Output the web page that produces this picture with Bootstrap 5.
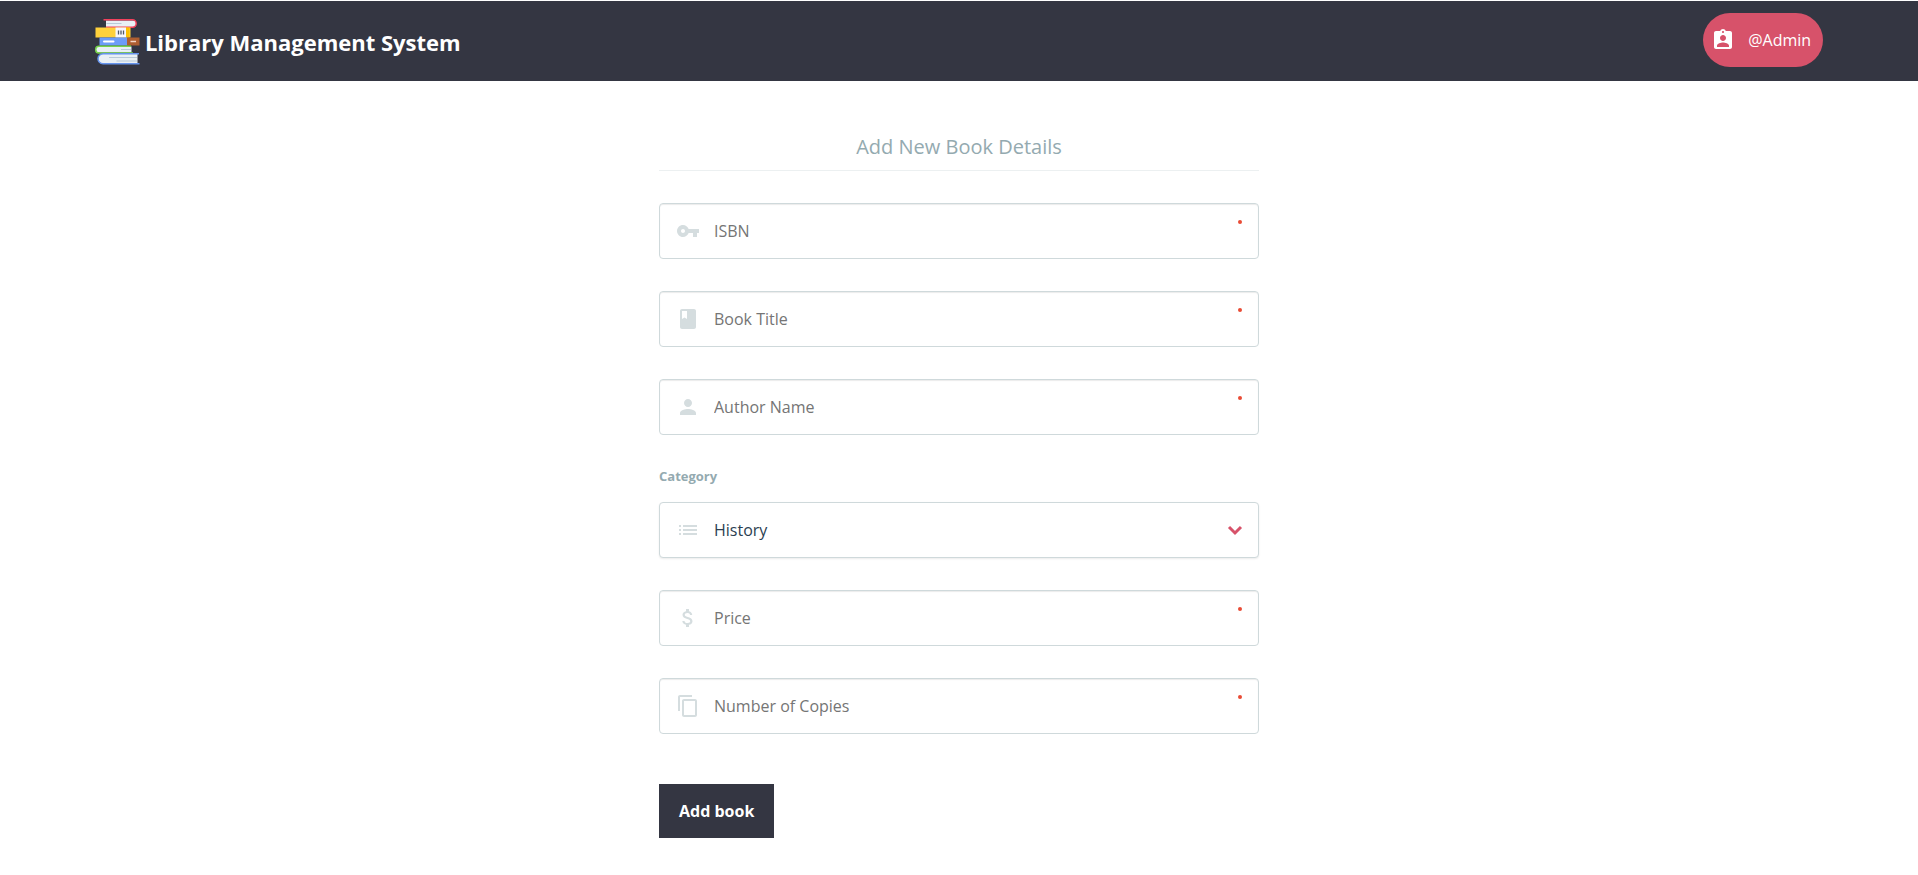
<!DOCTYPE html>
<html lang="en">
<head>
<meta charset="utf-8">
<meta name="viewport" content="width=device-width, initial-scale=1">
<title>Library Management System</title>
<link rel="stylesheet" href="https://cdn.jsdelivr.net/npm/bootstrap@5.3.0/dist/css/bootstrap.min.css">
<style>
  body { font-family: "Open Sans", sans-serif; font-size: 16px; color: #2b3e51; background: #fff; }
  .site-header { background: #343642; padding: 12px calc(5% - 1px) 14px; margin-top: 1px; }
  .site-title { color: #fff; font-size: 22px; font-weight: 700; line-height: 46px; padding-top: 6px; }
  .site-title:hover { color: #fff; }
  .site-logo { width: 46px; height: 46px; margin-right: 4px; }
  .user-btn { background: #d7526a; color: #fff; height: 54px; padding: 0 12px 0 8px; border: 0; gap: 13px; }
  .user-btn:hover { background: #c84860; color: #fff; }
  .book-form { max-width: 600px; margin: 48px auto 0; }
  .form-heading { color: #94aab0; font-size: 20px; line-height: 36px; padding-bottom: 5px; border-bottom: 1px solid #ecf0f1; margin-bottom: 32px; }
  .field { position: relative; margin-bottom: 32px; }
  .field > svg { position: absolute; left: 17px; top: 16px; fill: #d5dddf; pointer-events: none; }
  .field.is-required::after { content: ""; position: absolute; right: 17px; top: 17px; width: 4px; height: 4px; border-radius: 2px; background: #e94b35; }
  .field .form-control, .field .form-select { height: 56px; padding: 0 40px 0 54px; font-size: 16px; border: 1px solid #cfd9db; border-radius: 4px; color: #2b3e51; background-color: #fff; }
  .field .form-control { box-shadow: inset 0 1px 1px rgba(0, 0, 0, .08); }
  .field .form-control::placeholder { color: #757575; opacity: 1; }
  .field .form-select { box-shadow: 0 1px 2px rgba(0, 0, 0, .08);
    background-image: url("data:image/svg+xml,%3Csvg xmlns='http://www.w3.org/2000/svg' viewBox='0 0 16 16'%3E%3Cpath fill='none' stroke='%23d7526a' stroke-width='3' d='M2 5l6 6 6-6'/%3E%3C/svg%3E"); background-size: 16px 16px; background-position: right 15px center; }
  .field-label { color: #94aab0; font-size: 13px; font-weight: 700; line-height: 19px; margin-bottom: 16px; display: block; }
  .submit-btn { background: #343642; color: #fff; font-weight: 700; height: 54px; padding: 0 20px; border: 0; border-radius: 0; margin-top: 18px; }
  .submit-btn:hover { background: #454857; color: #fff; }
</style>
</head>
<body>
<header class="site-header d-flex justify-content-between align-items-start">
  <a href="#" class="site-title d-flex text-decoration-none">
    <svg class="site-logo" viewBox="0 0 46 46" aria-hidden="true">
      <path fill="#e9f0f5" d="M11 1.500h27a3 3 0 0 1 0 6.500H11z"/>
      <path fill="none" stroke="#f2415c" stroke-width="1.500" d="M8.500.8H37.500a3.700 3.700 0 0 1 0 7.400H11"/>
      <path stroke="#b9cad8" d="M11.500 4.500H26.500"/>
      <path fill="#ffd13b" d="M.5 8.500h35v10h-35z"/>
      <path fill="#fbbf00" d="M31 8.500h3.500v10H31z"/>
      <path fill="#f7f7fb" d="M20.500 8.500H31v10H20.500z"/>
      <path stroke="#515868" stroke-width="1.300" d="M23.500 11.500v4M26 11.500v4M28.500 11.500v4"/>
      <path fill="#6c9cf8" d="M4.500 18.500h28v8h-28z"/>
      <path fill="#ad5e31" d="M32 18.500h12.500v8H32z"/>
      <path stroke="#fff" stroke-width="2" stroke-linecap="round" d="M9 22.500h9.500"/>
      <path stroke="#f5d7c6" stroke-width="1.500" d="M35.500 22.500h5.500"/>
      <path fill="#e9f0f5" d="M4 27.500h32.500v6H4a3 3 0 0 1 0-6z"/>
      <path fill="none" stroke="#76d44b" stroke-width="1.500" d="M36 27.300H4a3.300 3.300 0 0 0 0 6.600h34"/>
      <path stroke="#b9cad8" d="M26 30.500h10"/>
      <path fill="#e9f0f5" d="M8 35h34.500v10H8a5 5 0 0 1 0-10z"/>
      <path fill="none" stroke="#6594ee" stroke-width="1.500" d="M44 34.800H8a5 5 0 0 0 0 10h36.500"/>
      <path stroke="#b9cad8" d="M14 38.500h28M21.500 42H42"/>
    </svg>
    <span>Library Management System</span>
  </a>
  <button type="button" class="btn user-btn rounded-pill d-flex align-items-center">
    <svg width="24" height="24" viewBox="0 0 24 24" fill="currentColor" aria-hidden="true"><path d="M19 3h-4.180C14.400 1.840 13.300 1 12 1s-2.400.84-2.820 2H5c-1.100 0-2 .9-2 2v14c0 1.100.9 2 2 2h14c1.100 0 2-.9 2-2V5c0-1.100-.9-2-2-2zm-7 0c.55 0 1 .45 1 1s-.45 1-1 1-1-.45-1-1 .45-1 1-1zm0 4c1.660 0 3 1.340 3 3s-1.340 3-3 3-3-1.340-3-3 1.340-3 3-3zm6 12H6v-1.400c0-2 4-3.100 6-3.100s6 1.100 6 3.100V19z"/></svg>
    <span>@Admin</span>
  </button>
</header>

<main class="container">
  <form class="book-form">
    <h1 class="form-heading text-center fw-normal">Add New Book Details</h1>

    <div class="field is-required">
      <svg width="24" height="24" viewBox="0 0 24 24" aria-hidden="true"><path d="M12.650 10C11.830 7.670 9.610 6 7 6c-3.310 0-6 2.690-6 6s2.690 6 6 6c2.610 0 4.830-1.670 5.650-4H17v4h4v-4h2v-4H12.650zM7 14c-1.100 0-2-.9-2-2s.9-2 2-2 2 .9 2 2-.9 2-2 2z"/></svg>
      <input class="form-control" id="isbn" type="text" placeholder="ISBN" aria-label="ISBN" required>
    </div>

    <div class="field is-required">
      <svg width="24" height="24" viewBox="0 0 24 24" aria-hidden="true"><path d="M18 2H6c-1.100 0-2 .9-2 2v16c0 1.100.9 2 2 2h12c1.100 0 2-.9 2-2V4c0-1.100-.9-2-2-2zM6 4h5v8l-2.500-1.500L6 12V4z"/></svg>
      <input class="form-control" id="title" type="text" placeholder="Book Title" aria-label="Book Title" required>
    </div>

    <div class="field is-required">
      <svg width="24" height="24" viewBox="0 0 24 24" aria-hidden="true"><path d="M12 12c2.210 0 4-1.790 4-4s-1.790-4-4-4-4 1.790-4 4 1.790 4 4 4zm0 2c-2.670 0-8 1.340-8 4v2h16v-2c0-2.660-5.330-4-8-4z"/></svg>
      <input class="form-control" id="author" type="text" placeholder="Author Name" aria-label="Author Name" required>
    </div>

    <label class="field-label" for="category">Category</label>
    <div class="field">
      <svg width="24" height="24" viewBox="0 0 24 24" aria-hidden="true"><path d="M3 13h2v-2H3v2zm0 4h2v-2H3v2zm0-8h2V7H3v2zm4 4h14v-2H7v2zm0 4h14v-2H7v2zM7 7v2h14V7H7z"/></svg>
      <select class="form-select" id="category">
        <option>History</option>
      </select>
    </div>

    <div class="field is-required">
      <svg width="24" height="24" viewBox="0 0 24 24" aria-hidden="true"><path d="M11.800 10.900c-2.270-.59-3-1.200-3-2.150 0-1.090 1.010-1.850 2.700-1.850 1.780 0 2.440.85 2.500 2.100h2.210c-.07-1.720-1.120-3.300-3.210-3.810V3h-3v2.160c-1.940.42-3.500 1.680-3.500 3.610 0 2.310 1.910 3.460 4.700 4.130 2.500.6 3 1.480 3 2.410 0 .69-.49 1.790-2.700 1.790-2.060 0-2.870-.92-2.980-2.100h-2.200c.12 2.190 1.760 3.420 3.680 3.830V21h3v-2.150c1.950-.37 3.500-1.500 3.500-3.550 0-2.840-2.430-3.810-4.700-4.400z"/></svg>
      <input class="form-control" id="price" type="text" placeholder="Price" aria-label="Price" required>
    </div>

    <div class="field is-required">
      <svg width="24" height="24" viewBox="0 0 24 24" aria-hidden="true"><path d="M16 1H4c-1.100 0-2 .9-2 2v14h2V3h12V1zm3 4H8c-1.100 0-2 .9-2 2v14c0 1.100.9 2 2 2h11c1.100 0 2-.9 2-2V7c0-1.100-.9-2-2-2zm0 16H8V7h11v14z"/></svg>
      <input class="form-control" id="copies" type="text" placeholder="Number of Copies" aria-label="Number of Copies" required>
    </div>

    <button type="submit" class="btn submit-btn">Add book</button>
  </form>
</main>
<script src="https://cdn.jsdelivr.net/npm/bootstrap@5.3.0/dist/js/bootstrap.bundle.min.js"></script>
</body>
</html>
